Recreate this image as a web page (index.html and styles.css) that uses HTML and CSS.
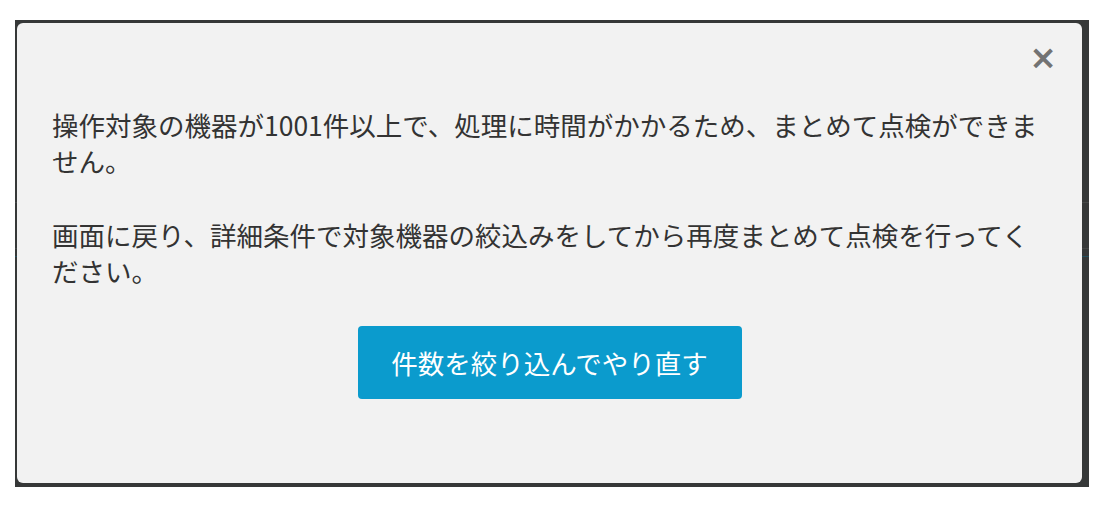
FILE: index.html
```html
<!DOCTYPE html>
<html lang="ja">
<head>
<meta charset="utf-8">
<title>確認</title>
<link rel="stylesheet" href="styles.css">
</head>
<body>
<div class="backdrop">
  <div class="modal">
    <button class="close" type="button" aria-label="閉じる">×</button>
    <div class="modal-body">
      <p class="msg">操作対象の機器が1001件以上で、処理に時間がかかるため、まとめて点検ができません。</p>
      <p class="msg">画面に戻り、詳細条件で対象機器の絞込みをしてから再度まとめて点検を行ってください。</p>
      <div class="actions">
        <button class="btn-primary" type="button">件数を絞り込んでやり直す</button>
      </div>
    </div>
  </div>
</div>
</body>
</html>
```

FILE: styles.css
```css
html, body {
  margin: 0;
  padding: 0;
  background: #ffffff;
}
body {
  font-family: "Noto Sans CJK JP", "Noto Sans", sans-serif;
  color: #333333;
}
.backdrop {
  margin: 20px 0 0 15px;
  width: 1074px;
  height: 467px;
  background-color: #363838;
  background-image:
    linear-gradient(to bottom, transparent 182px, #464848 182px, #464848 183px, transparent 183px),
    linear-gradient(to bottom, transparent 228px, #444646 228px, #444646 229px, transparent 229px),
    linear-gradient(to bottom, transparent 236px, #24505e 236px, #24505e 237px, transparent 237px);
  padding: 3px 0 0 2px;
  box-sizing: border-box;
}
.modal {
  position: relative;
  width: 1065px;
  height: 460px;
  background: #f2f2f2;
  border-radius: 6px;
  box-sizing: border-box;
  padding: 84px 35px 0 35px;
}
.close {
  position: absolute;
  top: 18px;
  right: 25px;
  border: 0;
  background: transparent;
  color: #737373;
  font-family: "DejaVu Sans", sans-serif;
  font-weight: bold;
  font-size: 33px;
  line-height: 33px;
  padding: 0;
  cursor: pointer;
}
.msg {
  max-width: 995px;
  margin: 0 0 38px 0;
  font-size: 26.5px;
  line-height: 36px;
}
.msg:first-child {
  margin-bottom: 38px;
}
.actions {
  display: flex;
  justify-content: center;
  margin-top: -1px;
}
.btn-primary {
  width: 384px;
  height: 73px;
  border: 0;
  border-radius: 4px;
  background: #0b9bcd;
  color: #ffffff;
  font-family: "Noto Sans CJK JP", sans-serif;
  font-size: 26.5px;
  padding: 0;
}
```
